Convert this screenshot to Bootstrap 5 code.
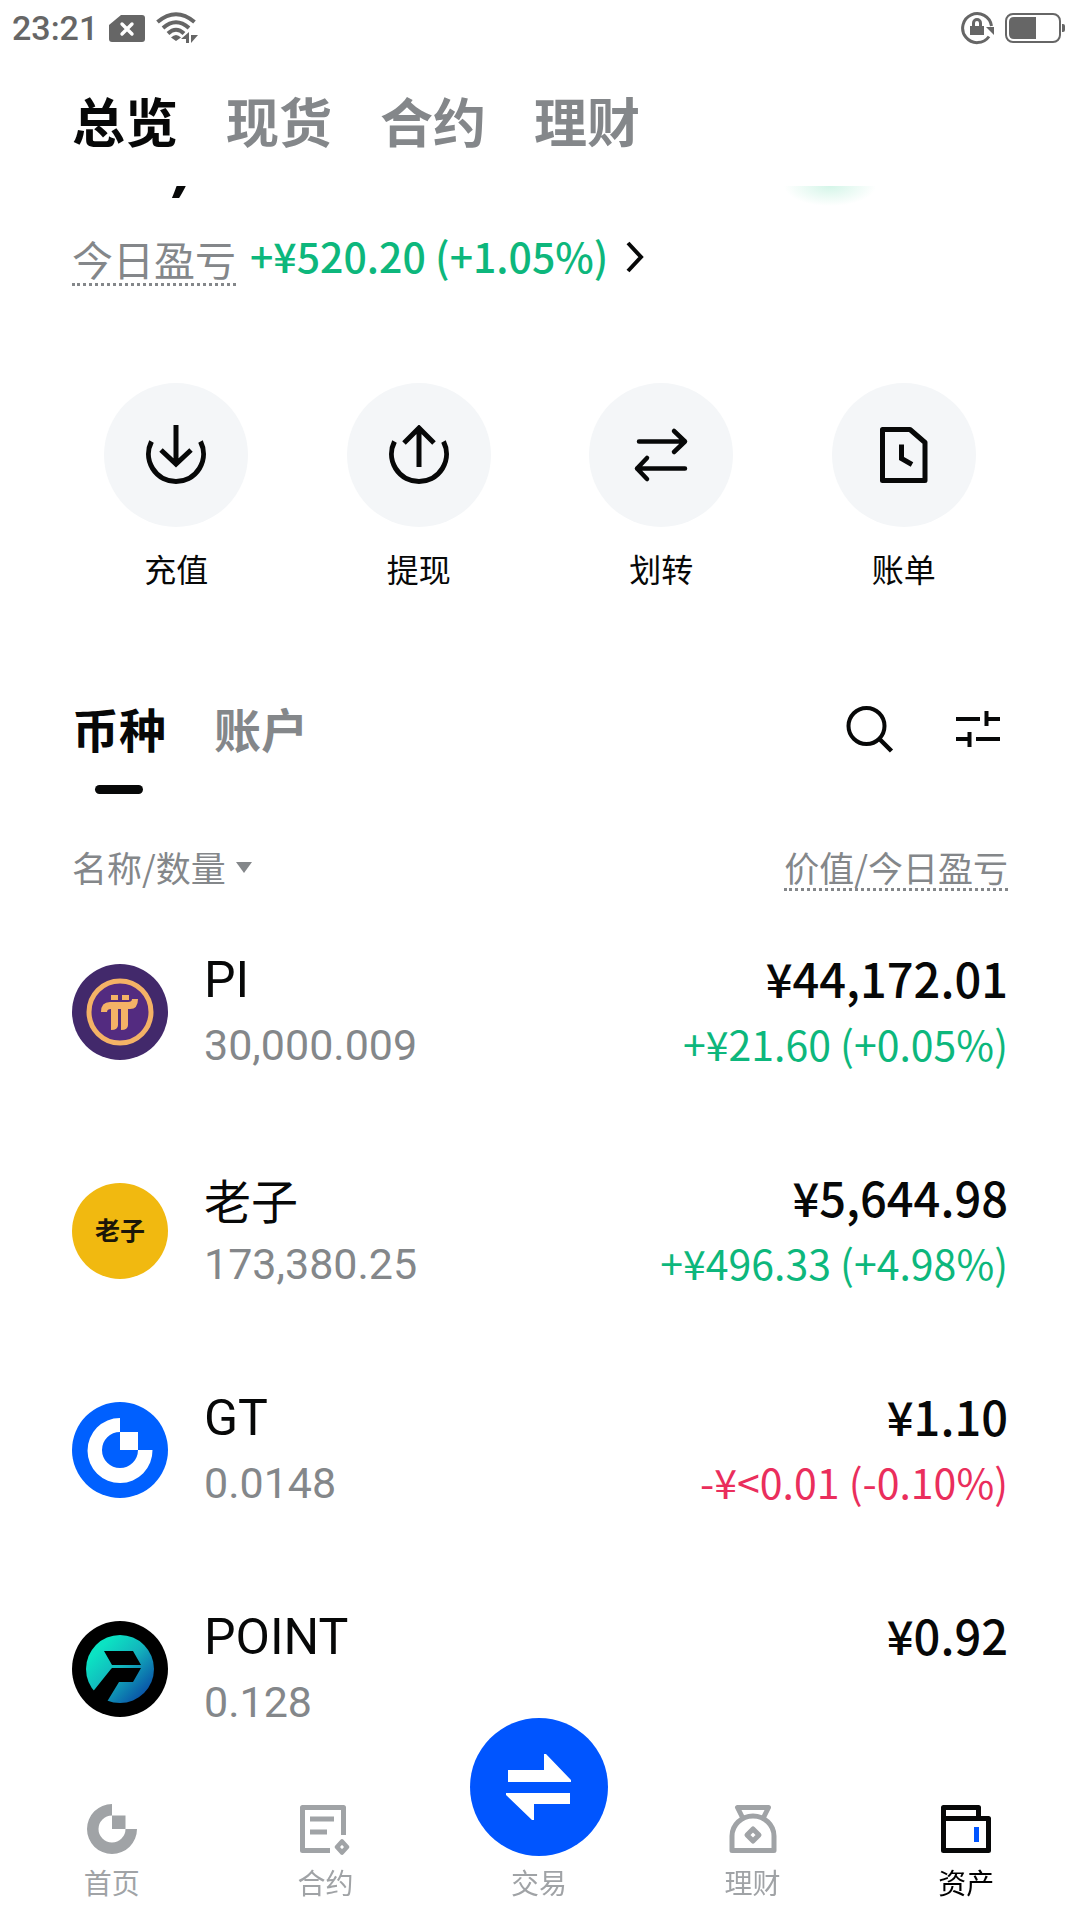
<!DOCTYPE html>
<html lang="zh-CN">
<head>
<meta charset="utf-8">
<meta name="viewport" content="width=device-width, initial-scale=1">
<title>资产总览</title>
<link rel="stylesheet" href="https://cdn.jsdelivr.net/npm/bootstrap@5.3.0/dist/css/bootstrap.min.css">
<style>
  :root { --ink: #070808; --muted: #84878a; --up: #0db77c; --down: #ea2e5c; --brand: #0055ff; --edge: 72px; }
  body { font-family: "Noto Sans CJK SC", "Noto Sans", sans-serif; color: var(--ink); background: #fff; }
  a, button { color: inherit; text-decoration: none; }
  .bare { background: none; border: 0; padding: 0; }
  svg { display: block; flex: none; }
  .tone-muted { color: var(--muted); }
  .tone-up { color: var(--up); }
  .tone-down { color: var(--down); }
  .edge { padding-left: var(--edge); padding-right: var(--edge); }

  .status-line { height: 56px; padding: 0 15px 0 12px; color: #666; font: 500 34px/56px Roboto, sans-serif; }
  .status-icons { gap: 11px; }
  .main-tabs { height: 130px; gap: 48px; font-size: 53px; line-height: 52px; font-weight: 700; padding-top: 38px; }

  .balance-peek { height: 12px; }
  .balance-comma { font: italic 700 64px/64px "Noto Sans", sans-serif; margin-left: 103px; }
  .glow { width: 160px; height: 30px; margin-right: 64px; background: radial-gradient(46px 20px at 46px 0, #d4f5e8, transparent); }
  .dotted { border-bottom: 3px dotted var(--muted); }
  .pnl { padding-top: 36px; gap: 14px; font-size: 41px; line-height: 49px; }
  .pnl-link { gap: 18px; line-height: 42px; font-weight: 500; }

  .actions { padding: 97px 55px 0; }
  .action-disc { width: 144px; height: 144px; background: #f4f6f8; }
  .action-text { font-size: 32px; line-height: 40px; margin-top: 21px; }

  .list-bar { padding-top: 112px; }
  .list-tabs { gap: 48px; font-size: 47px; line-height: 56px; font-weight: 700; }
  .tab-bar { width: 48px; height: 9px; margin-top: 29px; background: var(--ink); }
  .tools { gap: 62px; height: 58px; }
  .list-head { padding-top: 51px; font-size: 35px; line-height: 44px; }
  .list-head .dotted { line-height: 43px; }
  .sort-button { gap: 10px; }

  .coins { padding-top: 11px; }
  .coin { height: 219px; gap: 36px; }
  .coin-label { padding-top: 7px; }
  .coin-worth { padding-top: 3px; }
  .coin-name { font: 400 50px/60px Roboto, sans-serif; }
  .coin-name:lang(zh-Hans) { font: 400 47px/60px "Noto Sans CJK SC", sans-serif; }
  .coin-qty { font: 400 43px/70px Roboto, sans-serif; }
  .coin-value { font-size: 47px; line-height: 60px; font-weight: 500; }
  .coin-pnl { font-size: 41px; line-height: 70px; }

  .dock { height: 130px; padding: 0 7px 0 5px; background: #fff; color: #a0a3a6; font-size: 28px; line-height: 36px; }
  .dock-item { padding-top: 12px; }
  .dock-item span { margin-top: 8px; }
  .fab { width: 138px; height: 138px; margin-top: -72px; background: var(--brand); color: #fff; }
  .fab-label { margin-top: 8px; }
</style>
</head>
<body>
<header class="sticky-top bg-white">
  <div class="status-line d-flex align-items-center justify-content-between">
    <div class="status-icons d-flex align-items-center">
      <span>23:21</span>
      <svg width="36" height="27" viewBox="0 0 36 27"><path fill="#666" d="M12 0H33a3 3 0 0 1 3 3V24a3 3 0 0 1-3 3H3a3 3 0 0 1-3-3V10Z"/><path stroke="#fff" stroke-width="3.4" stroke-linecap="round" d="M13 9l10 10M23 9L13 19"/></svg>
      <svg width="43" height="32" viewBox="0 0 43 32"><g fill="none" stroke="#666" stroke-width="4"><path d="M1.500 10Q20-5.500 38.500 10"/><path d="M7 16Q20 4.500 33 16"/><path d="M12 21.500Q20 14 28 21.500"/></g><path fill="#666" d="M15 25.500Q20 20.500 25 25.500L20 29ZM33 20v11h-3v-4h-5ZM35 31V23h7Z"/></svg>
    </div>
    <div class="status-icons d-flex align-items-center">
      <svg width="33" height="33" viewBox="0 0 33 33"><path fill="none" stroke="#666" stroke-width="3" d="M28 24.500A14.500 14.500 0 1 1 30.500 14"/><path fill="#666" d="M25 15h8v8ZM9 14h14v9H9Z"/><path fill="none" stroke="#666" stroke-width="3" d="M12.500 15V11a3.500 3.500 0 0 1 7 0v4"/></svg>
      <svg width="60" height="30" viewBox="0 0 60 30"><rect x="1" y="1" width="54" height="28" rx="7" fill="none" stroke="#666" stroke-width="2"/><path fill="#666" d="M31 4V26H9q-5 0-5-5V9q0-5 5-5ZM57 11h1q2 0 2 2v4q0 2-2 2h-1Z"/></svg>
    </div>
  </div>
  <nav class="main-tabs edge d-flex">
    <a href="#">总览</a>
    <a href="#" class="tone-muted">现货</a>
    <a href="#" class="tone-muted">合约</a>
    <a href="#" class="tone-muted">理财</a>
  </nav>
</header>

<main>
  <div class="balance-peek edge d-flex justify-content-between align-items-end">
    <span class="balance-comma">,</span>
    <span class="glow align-self-start"></span>
  </div>
  <section class="pnl edge d-flex align-items-start">
    <span class="tone-muted dotted">今日盈亏</span>
    <a href="#" class="pnl-link d-flex align-items-center">
      <span class="tone-up">+¥520.20 (+1.05%)</span>
      <svg width="18" height="38" viewBox="0 0 18 38"><path fill="none" stroke="#070808" stroke-width="4" d="M2 7L15 21L2 35"/></svg>
    </a>
  </section>

  <section class="actions d-flex">
    <button type="button" class="bare col d-flex flex-column align-items-center">
      <span class="action-disc rounded-circle d-flex align-items-center justify-content-center"><svg width="60" height="60" viewBox="0 0 60 60" fill="none" stroke="#070808" stroke-width="5"><path d="M5.500 16.500A27.500 27.500 0 1 0 54.500 16.500"/><path d="M30 0V39M15 25L30 39L45 25"/></svg></span>
      <span class="action-text">充值</span>
    </button>
    <button type="button" class="bare col d-flex flex-column align-items-center">
      <span class="action-disc rounded-circle d-flex align-items-center justify-content-center"><svg width="60" height="60" viewBox="0 0 60 60" fill="none" stroke="#070808" stroke-width="5"><path d="M5.500 16.500A27.500 27.500 0 1 0 54.500 16.500"/><path d="M30 42V3M15 18L30 3L45 18"/></svg></span>
      <span class="action-text">提现</span>
    </button>
    <button type="button" class="bare col d-flex flex-column align-items-center">
      <span class="action-disc rounded-circle d-flex align-items-center justify-content-center"><svg width="56" height="56" viewBox="0 0 56 56" fill="none" stroke="#070808" stroke-width="4.500" stroke-linecap="round" stroke-linejoin="round"><path d="M6 14.500H52M41 4L52 14.500L41 25M52 41.500H4M14 31L4 41.500L14 52"/></svg></span>
      <span class="action-text">划转</span>
    </button>
    <button type="button" class="bare col d-flex flex-column align-items-center">
      <span class="action-disc rounded-circle d-flex align-items-center justify-content-center"><svg width="48" height="58" viewBox="0 0 48 58" fill="none" stroke="#070808" stroke-width="5" stroke-linejoin="round"><path d="M2.500 3.500H30L45 16.500V54.500H2.500Z"/><path stroke-linejoin="miter" d="M21.500 18.500V32.500L32 38.500"/></svg></span>
      <span class="action-text">账单</span>
    </button>
  </section>

  <section class="list-bar edge d-flex justify-content-between align-items-start">
    <div class="list-tabs d-flex align-items-start">
      <a href="#" class="d-flex flex-column align-items-center">币种<span class="tab-bar rounded-pill"></span></a>
      <a href="#" class="tone-muted">账户</a>
    </div>
    <div class="tools d-flex align-items-center">
      <button type="button" class="bare" aria-label="搜索"><svg width="50" height="50" viewBox="0 0 50 50" fill="none" stroke="#070808" stroke-width="4"><circle cx="22.500" cy="22" r="18"/><path stroke-width="4.500" d="M35 34.500L47.500 47"/></svg></button>
      <button type="button" class="bare pe-2" aria-label="筛选"><svg width="44" height="36" viewBox="0 0 44 36" fill="none" stroke="#070808" stroke-width="4"><path d="M0 8H24M30.500 0V15M32 8H44M0 28H15M13.500 21V36M20 28H44"/></svg></button>
    </div>
  </section>

  <div class="list-head edge d-flex justify-content-between align-items-start tone-muted">
    <button type="button" class="bare sort-button d-flex align-items-center">名称/数量<svg width="16" height="11" viewBox="0 0 16 11"><path fill="#84878a" d="M0 0H16L8 11Z"/></svg></button>
    <span class="dotted">价值/今日盈亏</span>
  </div>

  <ul class="coins list-unstyled edge mb-0">
    <li class="coin d-flex align-items-center">
      <svg width="96" height="96" viewBox="0 0 96 96"><circle cx="48" cy="48" r="48" fill="#42296b"/><circle cx="48" cy="48" r="31" fill="#532b80" stroke="#f4b266" stroke-width="5"/><path fill="#f4b266" d="M39 31h7v5h-7ZM50 31h7v5h-7ZM29 48q0-10 9-10H56q4 0 4-3h6q0 10-8 10H56v16q0 5-7 5V45h-3v16q0 5-7 5V45q-4 0-4 3Z"/></svg>
      <div class="coin-label flex-grow-1"><div class="coin-name">PI</div><div class="coin-qty tone-muted">30,000.009</div></div>
      <div class="coin-worth text-end"><div class="coin-value">¥44,172.01</div><div class="coin-pnl tone-up">+¥21.60 (+0.05%)</div></div>
    </li>
    <li class="coin d-flex align-items-center">
      <svg width="96" height="96" viewBox="0 0 96 96"><circle cx="48" cy="48" r="48" fill="#f1b910"/><text x="48" y="57" text-anchor="middle" font-size="25" font-weight="700" fill="#1b1608">老子</text></svg>
      <div class="coin-label flex-grow-1"><div class="coin-name" lang="zh-Hans">老子</div><div class="coin-qty tone-muted">173,380.25</div></div>
      <div class="coin-worth text-end"><div class="coin-value">¥5,644.98</div><div class="coin-pnl tone-up">+¥496.33 (+4.98%)</div></div>
    </li>
    <li class="coin d-flex align-items-center">
      <svg width="96" height="96" viewBox="0 0 96 96"><circle cx="48" cy="48" r="48" fill="#0060ff"/><path fill="#fff" d="M48 16A32.500 32.500 0 1 0 80.500 48H66A18 18 0 1 1 48 30ZM48 30H66V48H48Z"/></svg>
      <div class="coin-label flex-grow-1"><div class="coin-name">GT</div><div class="coin-qty tone-muted">0.0148</div></div>
      <div class="coin-worth text-end"><div class="coin-value">¥1.10</div><div class="coin-pnl tone-down">-¥&lt;0.01 (-0.10%)</div></div>
    </li>
    <li class="coin d-flex align-items-center">
      <svg width="96" height="96" viewBox="0 0 96 96"><defs><linearGradient id="sea" x1="0.200" y1="0.200" x2="0.850" y2="0.850"><stop offset="0" stop-color="#0be3c3"/><stop offset=".45" stop-color="#13b6bd"/><stop offset="1" stop-color="#0a57a8"/></linearGradient></defs><circle cx="48" cy="48" r="48" fill="#000"/><circle cx="48" cy="48" r="34" fill="url(#sea)"/><path d="M32 30H61L69 44H40ZM40 47H69L61 61H47L33 84L18 74L23 68L39 48Z"/></svg>
      <div class="coin-label flex-grow-1"><div class="coin-name">POINT</div><div class="coin-qty tone-muted">0.128</div></div>
      <div class="coin-worth text-end"><div class="coin-value">¥0.92</div><div class="coin-pnl">&nbsp;</div></div>
    </li>
  </ul>
</main>

<nav class="dock fixed-bottom d-flex">
  <a href="#" class="dock-item col d-flex flex-column align-items-center">
    <svg width="50" height="54" viewBox="0 0 50 54"><path fill="#a0a3a6" d="M25 2A25 25 0 1 0 50 27H38.500A13.500 13.500 0 1 1 25 13.500ZM25 13.500H38.500V27H25Z"/></svg><span>首页</span>
  </a>
  <a href="#" class="dock-item col d-flex flex-column align-items-center">
    <svg width="50" height="54" viewBox="0 0 50 54" fill="none" stroke="#a0a3a6" stroke-width="5" stroke-linejoin="round"><path d="M43.500 33V5.500H2.500V48.500H30"/><path d="M10 17H34M10 30H27"/><path stroke-width="4.500" d="M42 39.500L47 45L42 50.500L37 45Z"/></svg><span>合约</span>
  </a>
  <a href="#" class="col d-flex flex-column align-items-center">
    <div class="fab rounded-circle d-flex align-items-center justify-content-center"><svg width="66" height="68" viewBox="0 0 66 68" fill="#fff"><path d="M2 17H38V1H40L65 27V29H2ZM64 40V51H28V67H26L0 42V40Z"/></svg></div><span class="fab-label">交易</span>
  </a>
  <a href="#" class="dock-item col d-flex flex-column align-items-center">
    <svg width="50" height="54" viewBox="0 0 50 54" fill="none" stroke="#a0a3a6" stroke-width="5" stroke-linejoin="round"><path d="M4 48.500V34a21 20 0 0 1 42 0V48.500Z"/><path d="M14.500 15.500L9.500 5.500H40.500L35.500 15.500"/><path stroke-width="5" d="M25 27L31 33L25 39L19 33Z"/></svg><span>理财</span>
  </a>
  <a href="#" class="dock-item col d-flex flex-column align-items-center text-black">
    <svg width="50" height="54" viewBox="0 0 50 54" fill="none" stroke="#070808" stroke-width="5" stroke-linejoin="round"><path d="M2.500 16V5.500H37.500V16M2.500 16.500H47.500V48.500H2.500Z"/><path stroke="#0055ff" stroke-linejoin="miter" d="M35.500 25V40"/></svg><span>资产</span>
  </a>
</nav>
<script src="https://cdn.jsdelivr.net/npm/bootstrap@5.3.0/dist/js/bootstrap.bundle.min.js"></script>
</body>
</html>
